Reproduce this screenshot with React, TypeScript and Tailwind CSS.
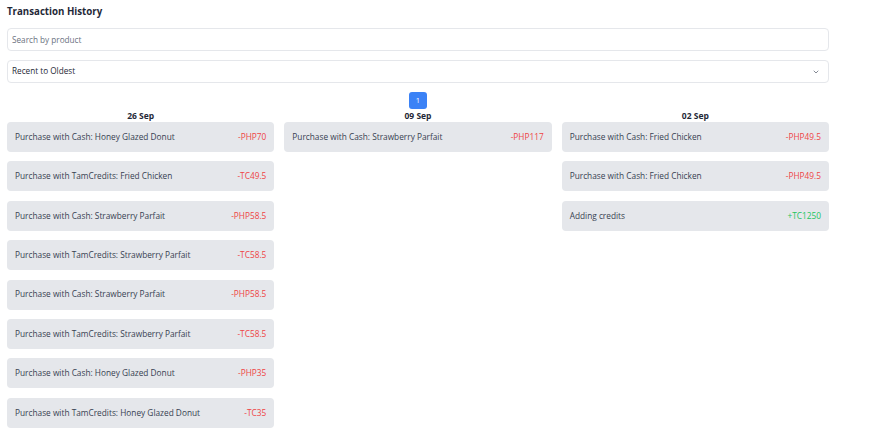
import { type ReactNode } from "react";

type Tx = { label: string; amount: string; credit?: boolean };

const columns: { date: string; items: Tx[] }[] = [
  {
    date: "26 Sep",
    items: [
      { label: "Purchase with Cash: Honey Glazed Donut", amount: "-PHP70" },
      { label: "Purchase with TamCredits: Fried Chicken", amount: "-TC49.5" },
      { label: "Purchase with Cash: Strawberry Parfait", amount: "-PHP58.5" },
      { label: "Purchase with TamCredits: Strawberry Parfait", amount: "-TC58.5" },
      { label: "Purchase with Cash: Strawberry Parfait", amount: "-PHP58.5" },
      { label: "Purchase with TamCredits: Strawberry Parfait", amount: "-TC58.5" },
      { label: "Purchase with Cash: Honey Glazed Donut", amount: "-PHP35" },
      { label: "Purchase with TamCredits: Honey Glazed Donut", amount: "-TC35" }
    ]
  },
  {
    date: "09 Sep",
    items: [{ label: "Purchase with Cash: Strawberry Parfait", amount: "-PHP117" }]
  },
  {
    date: "02 Sep",
    items: [
      { label: "Purchase with Cash: Fried Chicken", amount: "-PHP49.5" },
      { label: "Purchase with Cash: Fried Chicken", amount: "-PHP49.5" },
      { label: "Adding credits", amount: "+TC1250", credit: true }
    ]
  }
];

export default function App(): ReactNode {
  return (
    <div className="min-h-screen bg-white font-['Open_Sans',sans-serif] text-[#1f2937]">
      <div className="w-[822px] pl-[7px] pt-[5px] box-content">
        <h1 className="text-[9.7px] font-bold leading-[14px]">Transaction History</h1>

        <input
          placeholder="Search by product"
          className="mt-[9px] block h-[23px] w-full rounded-[4px] border border-[#e5e7eb] px-[4px] text-[8.2px] outline-none placeholder:text-[#6b7280]"
        />

        <div className="mt-[9px] flex h-[23px] w-full items-center justify-between rounded-[4px] border border-[#e5e7eb] pl-[4px] pr-[8px] text-[8.2px]">
          <span>Recent to Oldest</span>
          <svg width="8" height="8" viewBox="0 0 24 24" fill="none" stroke="#6b7280" strokeWidth="2.5" strokeLinecap="round" strokeLinejoin="round">
            <path d="m6 9 6 6 6-6" />
          </svg>
        </div>

        <div className="mt-[9px] flex justify-center">
          <button className="flex h-[17px] w-[18px] items-center justify-center rounded-[3px] bg-[#3b82f6] text-[7.5px] text-white">
            1
          </button>
        </div>

        <div className="grid grid-cols-3 gap-[10px]">
          {columns.map((col) => (
            <div key={col.date} className="flex flex-col">
              <div className="text-center text-[8.5px] font-bold leading-[13px]">{col.date}</div>
              <div className="flex flex-col gap-[9.4px]">
                {col.items.map((tx, i) => (
                  <div
                    key={i}
                    className="flex h-[30px] items-center justify-between rounded-[4px] bg-[#e5e7eb] px-[8px] text-[8.3px] text-[#374151]"
                  >
                    <span>{tx.label}</span>
                    <span className={tx.credit ? "text-[#22c55e]" : "text-[#ef4444]"}>{tx.amount}</span>
                  </div>
                ))}
              </div>
            </div>
          ))}
        </div>
      </div>
    </div>
  );
}
